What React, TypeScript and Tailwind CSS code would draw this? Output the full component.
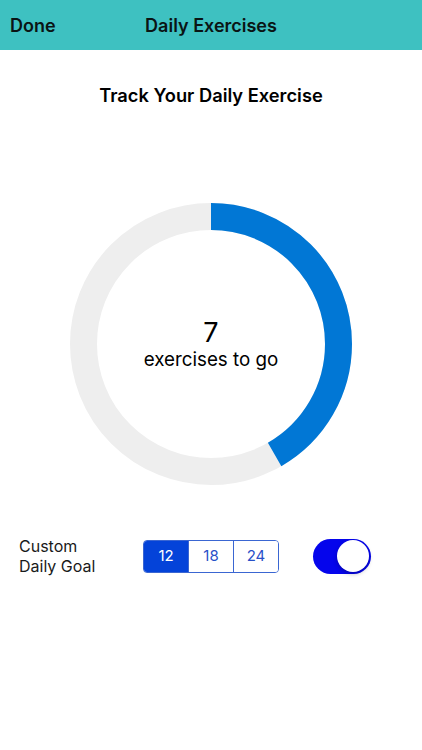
import React, { useState } from 'react';

const GOALS = [12, 18, 24];

const ProgressRing: React.FC<{ done: number; goal: number }> = ({ done, goal }) => {
  const r = 127.5;
  const c = 2 * Math.PI * r;
  const frac = done / goal;
  return (
    <div className="relative w-[282px] h-[282px]">
      <svg width="282" height="282" viewBox="0 0 282 282" className="absolute inset-0">
        <circle cx="141" cy="141" r={r} fill="none" stroke="#eeeeee" strokeWidth="27" />
        <circle
          cx="141"
          cy="141"
          r={r}
          fill="none"
          stroke="#0177d5"
          strokeWidth="27"
          strokeDasharray={`${c * frac} ${c}`}
          transform="rotate(-90 141 141)"
        />
      </svg>
      <div className="absolute inset-0 flex flex-col items-center justify-center text-black">
        <div className="text-[27px] leading-[32px] mt-[-1px]">{goal - done}</div>
        <div className="text-[18.8px] leading-[22px]">exercises to go</div>
      </div>
    </div>
  );
};

export default function App() {
  const [goal, setGoal] = useState(12);
  const [custom, setCustom] = useState(true);

  return (
    <div className="w-[422px] h-[750px] bg-white font-['Inter',sans-serif] text-black overflow-hidden">
      <div className="relative h-[50px] bg-[#3ec1c1] flex items-center justify-center">
        <button className="absolute left-[10px] text-[18px] font-semibold text-[#0a1414]">Done</button>
        <h1 className="text-[18px] font-semibold text-[#0a1414]">Daily Exercises</h1>
      </div>

      <h2 className="mt-[33px] text-center text-[18.3px] font-semibold leading-[24px]">
        Track Your Daily Exercise
      </h2>

      <div className="flex justify-center mt-[96px]">
        <ProgressRing done={5} goal={goal} />
      </div>

      <div className="flex items-center mt-[51px] pl-[19px]">
        <div className="w-[124px] text-[16px] leading-[20px] text-[#1a1a1a]">
          Custom
          <br />
          Daily Goal
        </div>
        <div className="flex h-[33px] w-[136px] rounded-[4px] border border-[#3a66d2] overflow-hidden">
          {GOALS.map((g, i) => (
            <button
              key={g}
              onClick={() => setGoal(g)}
              className={`flex-1 text-[15px] ${i > 0 ? 'border-l border-[#3a66d2]' : ''} ${
                goal === g ? 'bg-[#0443d9] text-white' : 'bg-white text-[#2850c8]'
              }`}
            >
              {g}
            </button>
          ))}
        </div>
        <button
          onClick={() => setCustom(!custom)}
          className={`ml-[34px] relative w-[58px] h-[35px] rounded-full ${custom ? 'bg-[#0505ec]' : 'bg-gray-300'}`}
        >
          <span
            className={`absolute top-[1.5px] w-[32px] h-[32px] rounded-full bg-white shadow-[0_2px_4px_rgba(0,0,0,0.25)] ${
              custom ? 'right-[2px]' : 'left-[2px]'
            }`}
          />
        </button>
      </div>
    </div>
  );
}
